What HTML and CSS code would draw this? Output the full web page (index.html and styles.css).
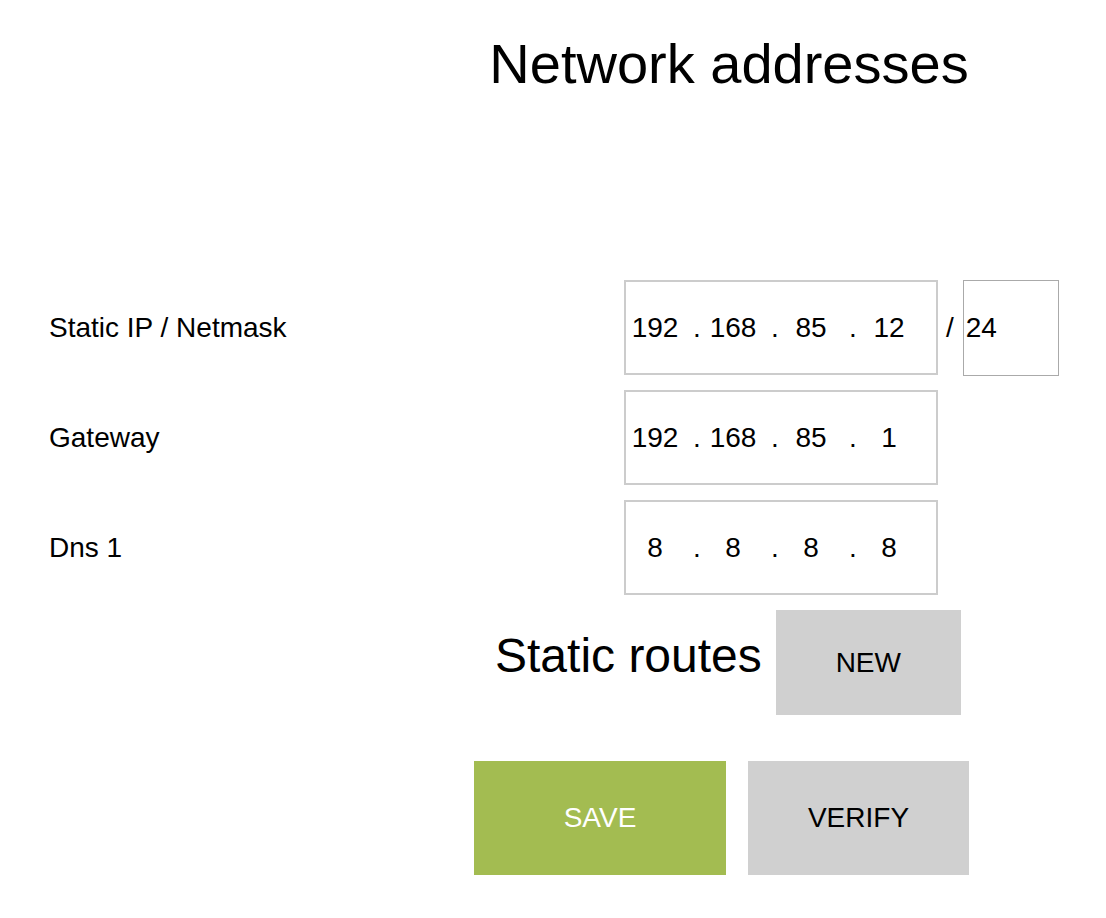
FILE: index.html
```html
<!DOCTYPE html>
<html lang="en">
<head>
  <meta charset="UTF-8">
  <meta name="viewport" content="width=device-width, initial-scale=1.0">
  <title>Network addresses</title>
  <link rel="stylesheet" href="styles.css">
</head>
<body>
  <h1 class="title">Network addresses</h1>

  <form class="network-form">
    <!-- Static IP -->
    <div class="row">
      <label class="row-label">Static IP / Netmask</label>
      <div class="ip-box">
        <input class="octet" type="text" value="192">
        <span class="dot">.</span>
        <input class="octet" type="text" value="168">
        <span class="dot">.</span>
        <input class="octet" type="text" value="85">
        <span class="dot">.</span>
        <input class="octet" type="text" value="12">
      </div>
      <span class="slash">/</span>
      <input class="mask" type="text" value="24">
    </div>

    <!-- Gateway -->
    <div class="row">
      <label class="row-label">Gateway</label>
      <div class="ip-box">
        <input class="octet" type="text" value="192">
        <span class="dot">.</span>
        <input class="octet" type="text" value="168">
        <span class="dot">.</span>
        <input class="octet" type="text" value="85">
        <span class="dot">.</span>
        <input class="octet" type="text" value="1">
      </div>
    </div>

    <!-- Dns -->
    <div class="row">
      <label class="row-label">Dns 1</label>
      <div class="ip-box">
        <input class="octet" type="text" value="8">
        <span class="dot">.</span>
        <input class="octet" type="text" value="8">
        <span class="dot">.</span>
        <input class="octet" type="text" value="8">
        <span class="dot">.</span>
        <input class="octet" type="text" value="8">
      </div>
    </div>

    <!-- Static routes -->
    <div class="routes">
      <h2 class="routes-title">Static routes</h2>
      <button type="button" class="btn btn-new">NEW</button>
    </div>

    <!-- Actions -->
    <div class="actions">
      <button type="submit" class="btn btn-save">SAVE</button>
      <button type="button" class="btn btn-verify">VERIFY</button>
    </div>
  </form>
</body>
</html>
```

FILE: styles.css
```css
body {
  margin: 0;
  font-family: "Liberation Sans", Arial, sans-serif;
  color: #000;
  background-color: #fff;
}
.title {
  margin: 32px 0 0 352px;
  width: 754px;
  font-size: 56px;
  line-height: 64px;
  font-weight: normal;
  text-align: center;
}
.network-form {
  margin-top: 184px;
  display: flex;
  flex-direction: column;
  gap: 15px;
}
.row {
  display: flex;
  align-items: center;
  height: 95px;
  padding-left: 49px;
  font-size: 28px;
}
.row-label {
  width: 575px;
}
.ip-box {
  display: flex;
  align-items: center;
  box-sizing: border-box;
  width: 314px;
  height: 95px;
  border: 2px solid #cccccc;
}
.octet {
  width: 58px;
  padding: 0;
  border: none;
  outline: none;
  font-family: inherit;
  font-size: 28px;
  text-align: center;
  color: #000;
  background: transparent;
}
.dot {
  box-sizing: border-box;
  width: 20px;
  padding-left: 9px;
}
.slash {
  margin: 0 9px 0 8px;
}
.mask {
  box-sizing: border-box;
  width: 96px;
  height: 96px;
  margin-top: 1px;
  padding: 0 0 0 2px;
  border: 1px solid #aaaaaa;
  outline: none;
  font-family: inherit;
  font-size: 28px;
  color: #000;
}
.routes {
  display: flex;
  align-items: flex-start;
  padding-left: 495px;
}
.routes-title {
  margin: 18px 14px 0 0;
  font-size: 48px;
  font-weight: normal;
}
.btn {
  border: none;
  font-family: inherit;
  font-size: 28px;
  cursor: pointer;
}
.btn-new {
  width: 185px;
  height: 105px;
  background-color: #d0d0d0;
  color: #000;
}
.actions {
  display: flex;
  gap: 22px;
  margin-top: 31px;
  padding-left: 474px;
}
.btn-save {
  width: 252px;
  height: 114px;
  background-color: #a3bc51;
  color: #fff;
}
.btn-verify {
  width: 221px;
  height: 114px;
  background-color: #d0d0d0;
  color: #000;
}
```
